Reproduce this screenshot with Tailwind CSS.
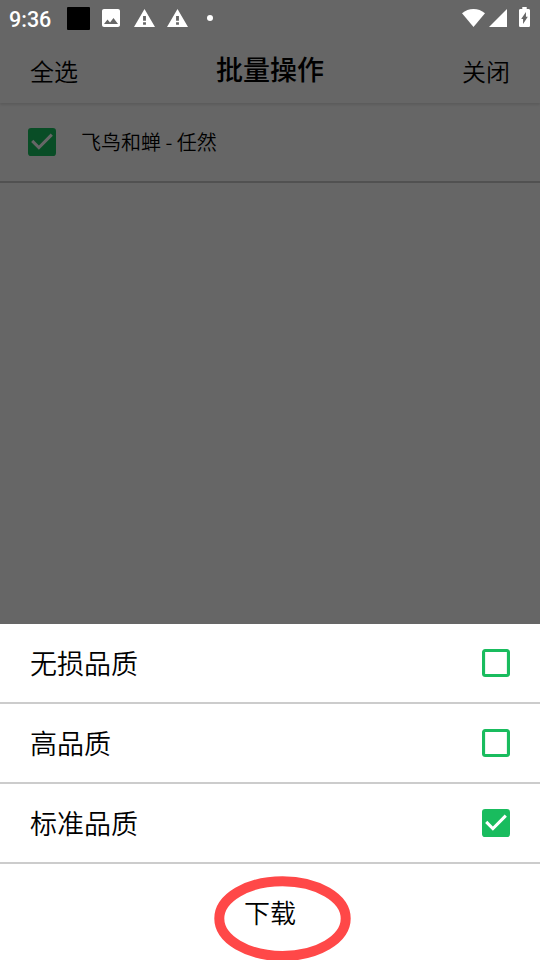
<!DOCTYPE html>
<html lang="zh-CN">
<head>
<meta charset="utf-8">
<meta name="viewport" content="width=device-width">
<title>批量操作</title>
<script src="https://cdn.jsdelivr.net/npm/@tailwindcss/browser@4"></script>
</head>
<body class="overflow-hidden">
<div class="relative flex h-[960px] w-[540px] flex-col overflow-hidden bg-[#666] text-black font-['Noto_Sans_CJK_SC',sans-serif]">
  <!-- Status bar -->
  <div class="flex h-9 shrink-0 items-center pl-[9px] pr-[10px] text-white">
    <span class="w-[58px] pt-[3px] font-[Roboto,sans-serif] text-[21.5px] font-medium leading-none">9:36</span>
    <span class="h-[23px] w-[23px] rounded-[1px] bg-black"></span>
    <svg class="ml-[12px] h-[18px] w-[18px]" viewBox="3 3 18 18" fill="currentColor"><path d="M21 19V5c0-1.100-.9-2-2-2H5c-1.100 0-2 .9-2 2v14c0 1.100.9 2 2 2h14c1.100 0 2-.9 2-2zM8.500 13.500l2.500 3.010L14.500 12l4.500 6H5l3.500-4.500z"/></svg>
    <svg class="ml-[14px] h-[18px] w-[21px]" viewBox="1 2 22 19" preserveAspectRatio="none" fill="currentColor"><path d="M1 21h22L12 2 1 21zm12.500-2.500h-3v-2.500h3v2.500zm0-4h-3v-5h3v5z"/></svg>
    <svg class="ml-3 h-[18px] w-[21px]" viewBox="1 2 22 19" preserveAspectRatio="none" fill="currentColor"><path d="M1 21h22L12 2 1 21zm12.500-2.500h-3v-2.500h3v2.500zm0-4h-3v-5h3v5z"/></svg>
    <span class="ml-[19px] h-[6px] w-[6px] rounded-full bg-white"></span>
    <svg class="ml-auto h-[18px] w-[23px]" viewBox="0 0 23 18" fill="currentColor"><path d="M11.500 18 0 4.300C3.300 1.500 7.300 0 11.500 0S19.700 1.500 23 4.300Z"/></svg>
    <svg class="ml-[4px] h-[18px] w-[18px]" viewBox="0 0 18 18" fill="currentColor"><path d="M0 18h18V0z"/></svg>
    <svg class="relative -top-px ml-3 h-5 w-[11px]" viewBox="7 2 10 20" preserveAspectRatio="none" fill="currentColor"><path d="M15.670 4H14V2h-4v2H8.330C7.600 4 7 4.600 7 5.330v15.330C7 21.400 7.600 22 8.330 22h7.330c.74 0 1.340-.6 1.340-1.330V5.330C17 4.600 16.400 4 15.670 4zM10.700 19v-5H9L13.300 7v4.700h1.700L10.700 19z"/></svg>
  </div>

  <!-- Title bar -->
  <header class="grid h-[67px] shrink-0 grid-cols-3 items-center px-[30px] shadow-[0_2px_2px_rgba(0,0,0,0.1)]">
    <span class="pt-0.5 text-[24px] font-[350] leading-8">全选</span>
    <h1 class="pb-0.5 text-center text-[27px] font-medium leading-8">批量操作</h1>
    <span class="pt-0.5 text-right text-[24px] font-[350] leading-8">关闭</span>
  </header>

  <!-- Selected song -->
  <div class="flex h-20 shrink-0 items-center border-b-2 border-[#515151] pl-[28px]">
    <svg class="h-7 w-7" viewBox="3 3 18 18"><rect x="3" y="3" width="18" height="18" rx="2" fill="#094d26"/><path d="M10 17l-5-5 1.410-1.410L10 14.170l7.590-7.590L19 8l-9 9z" fill="#666"/></svg>
    <span class="ml-[25px] text-[20px] font-[350] leading-7">飞鸟和蝉 - 任然</span>
  </div>

  <!-- Quality sheet -->
  <div class="mt-auto flex h-[336px] shrink-0 flex-col bg-white text-[27px] font-[350] leading-8">
    <div class="flex h-20 items-center justify-between border-b-2 border-[#ccc] px-[30px]">
      <span>无损品质</span>
      <svg class="h-7 w-7" viewBox="3 3 18 18" fill="#19bc5e"><path d="M19 5v14H5V5h14m0-2H5c-1.100 0-2 .9-2 2v14c0 1.100.9 2 2 2h14c1.100 0 2-.9 2-2V5c0-1.100-.9-2-2-2z"/></svg>
    </div>
    <div class="flex h-20 items-center justify-between border-b-2 border-[#ccc] px-[30px]">
      <span>高品质</span>
      <svg class="h-7 w-7" viewBox="3 3 18 18" fill="#19bc5e"><path d="M19 5v14H5V5h14m0-2H5c-1.100 0-2 .9-2 2v14c0 1.100.9 2 2 2h14c1.100 0 2-.9 2-2V5c0-1.100-.9-2-2-2z"/></svg>
    </div>
    <div class="flex h-20 items-center justify-between border-b-2 border-[#ccc] px-[30px]">
      <span>标准品质</span>
      <svg class="h-7 w-7" viewBox="3 3 18 18"><rect x="3" y="3" width="18" height="18" rx="2" fill="#19bc5e"/><path d="M10 17l-5-5 1.410-1.410L10 14.170l7.590-7.590L19 8l-9 9z" fill="#fff"/></svg>
    </div>
    <div class="flex h-24 items-center justify-center text-[26px]">下载</div>
  </div>

  <!-- Marker ring over the download action -->
  <svg class="absolute left-[214px] top-[876px] h-[84px] w-[138px]" viewBox="0 0 138 84" fill="none"><ellipse cx="68.500" cy="42.600" rx="63.200" ry="37.400" stroke="#ff4848" stroke-width="10"/></svg>
</div>
</body>
</html>
